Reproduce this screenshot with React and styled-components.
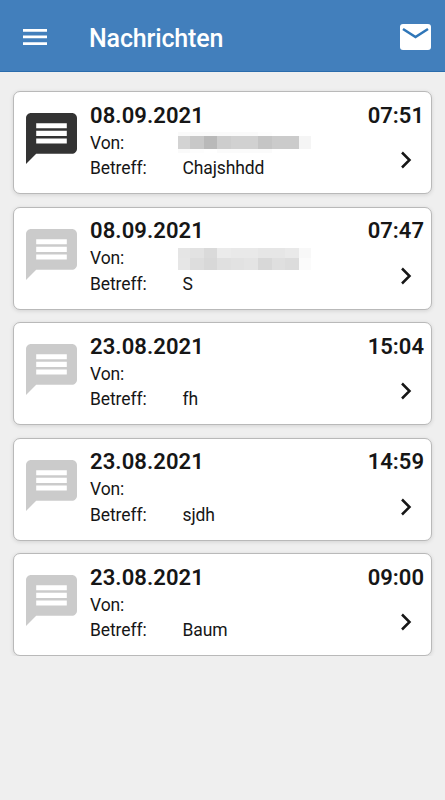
import React from "react";
import styled, { createGlobalStyle } from "styled-components";

const GlobalStyle = createGlobalStyle`
  * {
    box-sizing: border-box;
  }

  body {
    margin: 0;
    background-color: #efefef;
    font-family: Roboto, "Liberation Sans", sans-serif;
    color: #161616;
  }
`;

const Header = styled.header`
  display: flex;
  align-items: center;
  height: 72px;
  padding: 3px 14px 0 23px;
  background-color: #427fbc;
  border-bottom: 1px solid #2a6cac;
`;

const Title = styled.h1`
  flex: 1;
  margin: 4px 0 0 42px;
  color: white;
  font-size: 25px;
  font-weight: 500;
  line-height: 30px;
  letter-spacing: -0.15px;
`;

const Icon = styled.svg`
  display: block;
  flex: none;
`;

const List = styled.ul`
  list-style: none;
  display: flex;
  flex-flow: column nowrap;
  gap: 12.6px;
  margin: 0;
  padding: 19px 13px 0;
`;

const Card = styled.li`
  display: flex;
  height: 103px;
  padding: 11px 7px 0 12px;
  background-color: white;
  border: 1px solid #b9b9b9;
  border-radius: 7px;
  box-shadow: 0 1px 4px rgba(0, 0, 0, 0.12);
`;

const Bubble = styled.svg`
  display: block;
  flex: none;
  width: 51px;
  height: 51px;
  margin-top: 10px;
  fill: ${({ unread }) => (unread ? "#333333" : "#cbcbcb")};
`;

const Details = styled.div`
  flex: 1;
  margin: 0.7px 0 0 13px;
`;

const DateText = styled.div`
  height: 25px;
  font-size: 22px;
  font-weight: 600;
  line-height: 23px;
  letter-spacing: ${({ spacing }) => spacing || "0"};
`;

const Field = styled.div`
  display: flex;
  height: 25.3px;
  font-size: 17.5px;
  line-height: 28px;
  letter-spacing: -0.1px;
`;

const Label = styled.span`
  width: 92.5px;
`;

const Side = styled.div`
  display: flex;
  flex-flow: column nowrap;
  align-items: flex-end;
  margin-top: 0.7px;
`;

const Chevron = styled.svg`
  display: block;
  margin: 22.3px 12px 0 0;
`;

const Mosaic = styled.div`
  display: grid;
  grid-template-columns: 12px repeat(8, 13.6px) 12px;
  grid-template-rows: ${({ rows }) => rows};
  align-self: flex-start;
  margin: 3.3px 0 0 -4.5px;
`;

const Tile = styled.span`
  background-color: ${({ shade }) => shade};
`;

const firstMosaic = {
  rows: "4px 13.5px 3.5px",
  tiles: [
    "#fafafa", "#fafafa", "#fafafa", "#fafafa", "#fafafa", "#fafafa", "#fdfdfd", "#fff", "#fff", "#fff",
    "#d3d3d3", "#c8c8c8", "#b9b9b9", "#cdcdcd", "#d1d1d1", "#d1d1d1", "#c5c5c5", "#cbcbcb", "#cbcbcb", "#f5f5f5",
    "#fafafa", "#fdfdfd", "#fff", "#fbfbfb", "#fbfbfb", "#fbfbfb", "#fbfbfb", "#fff", "#fff", "#fff",
  ],
};

const secondMosaic = {
  rows: "10px 12.5px",
  tiles: [
    "#e5e5e5", "#e2e2e2", "#dadada", "#ebebeb", "#e9e9e9", "#e9e9e9", "#e6e6e6", "#e6e6e6", "#e9e9e9", "#f8f8f8",
    "#e6e6e6", "#dddddd", "#d8d8d8", "#e0e0e0", "#e2e2e2", "#e4e4e4", "#d8d8d8", "#dfdfdf", "#dcdcdc", "#fbfbfb",
  ],
};

const messages = [
  { date: "08.09.2021", time: "07:51", subject: "Chajshhdd", unread: true, sender: firstMosaic },
  { date: "08.09.2021", time: "07:47", subject: "S", sender: secondMosaic },
  { date: "23.08.2021", time: "15:04", subject: "fh" },
  { date: "23.08.2021", time: "14:59", subject: "sjdh" },
  { date: "23.08.2021", time: "09:00", subject: "Baum" },
];

const Message = ({ date, time, subject, unread, sender }) => {
  return (
    <Card>
      <Bubble viewBox="2 2 20 20" unread={unread ? 1 : undefined}>
        <path d="M20 2H4c-1.1 0-1.99.9-1.99 2L2 22l4-4h14c1.1 0 2-.9 2-2V4c0-1.1-.9-2-2-2zm-2 12H6v-2h12v2zm0-3H6V9h12v2zm0-3H6V6h12v2z" />
      </Bubble>
      <Details>
        <DateText spacing="0.08px">{date}</DateText>
        <Field>
          <Label>Von:</Label>
          {sender && (
            <Mosaic rows={sender.rows}>
              {sender.tiles.map((shade, i) => (
                <Tile key={i} shade={shade} />
              ))}
            </Mosaic>
          )}
        </Field>
        <Field>
          <Label>Betreff:</Label>
          <span>{subject}</span>
        </Field>
      </Details>
      <Side>
        <DateText>{time}</DateText>
        <Chevron width="12" height="18" viewBox="0 0 12 18">
          <path d="M2 1.5L9.5 9L2 16.5" fill="none" stroke="#161616" strokeWidth="2.5" />
        </Chevron>
      </Side>
    </Card>
  );
};

const App = () => {
  return (
    <>
      <GlobalStyle />
      <Header>
        <Icon width="24" height="16" viewBox="0 0 24 16">
          <path d="M0 0h24v2.7H0zM0 6.6h24v2.7H0zM0 13.3h24V16H0z" fill="white" />
        </Icon>
        <Title>Nachrichten</Title>
        <Icon width="31" height="26" viewBox="0 0 31 26">
          <rect width="31" height="26" rx="3" fill="white" />
          <path d="M3 5L15.5 13L28 5" fill="none" stroke="#2f76b8" strokeWidth="2.6" />
        </Icon>
      </Header>
      <List>
        {messages.map((message, i) => (
          <Message key={i} {...message} />
        ))}
      </List>
    </>
  );
};

export default App;
